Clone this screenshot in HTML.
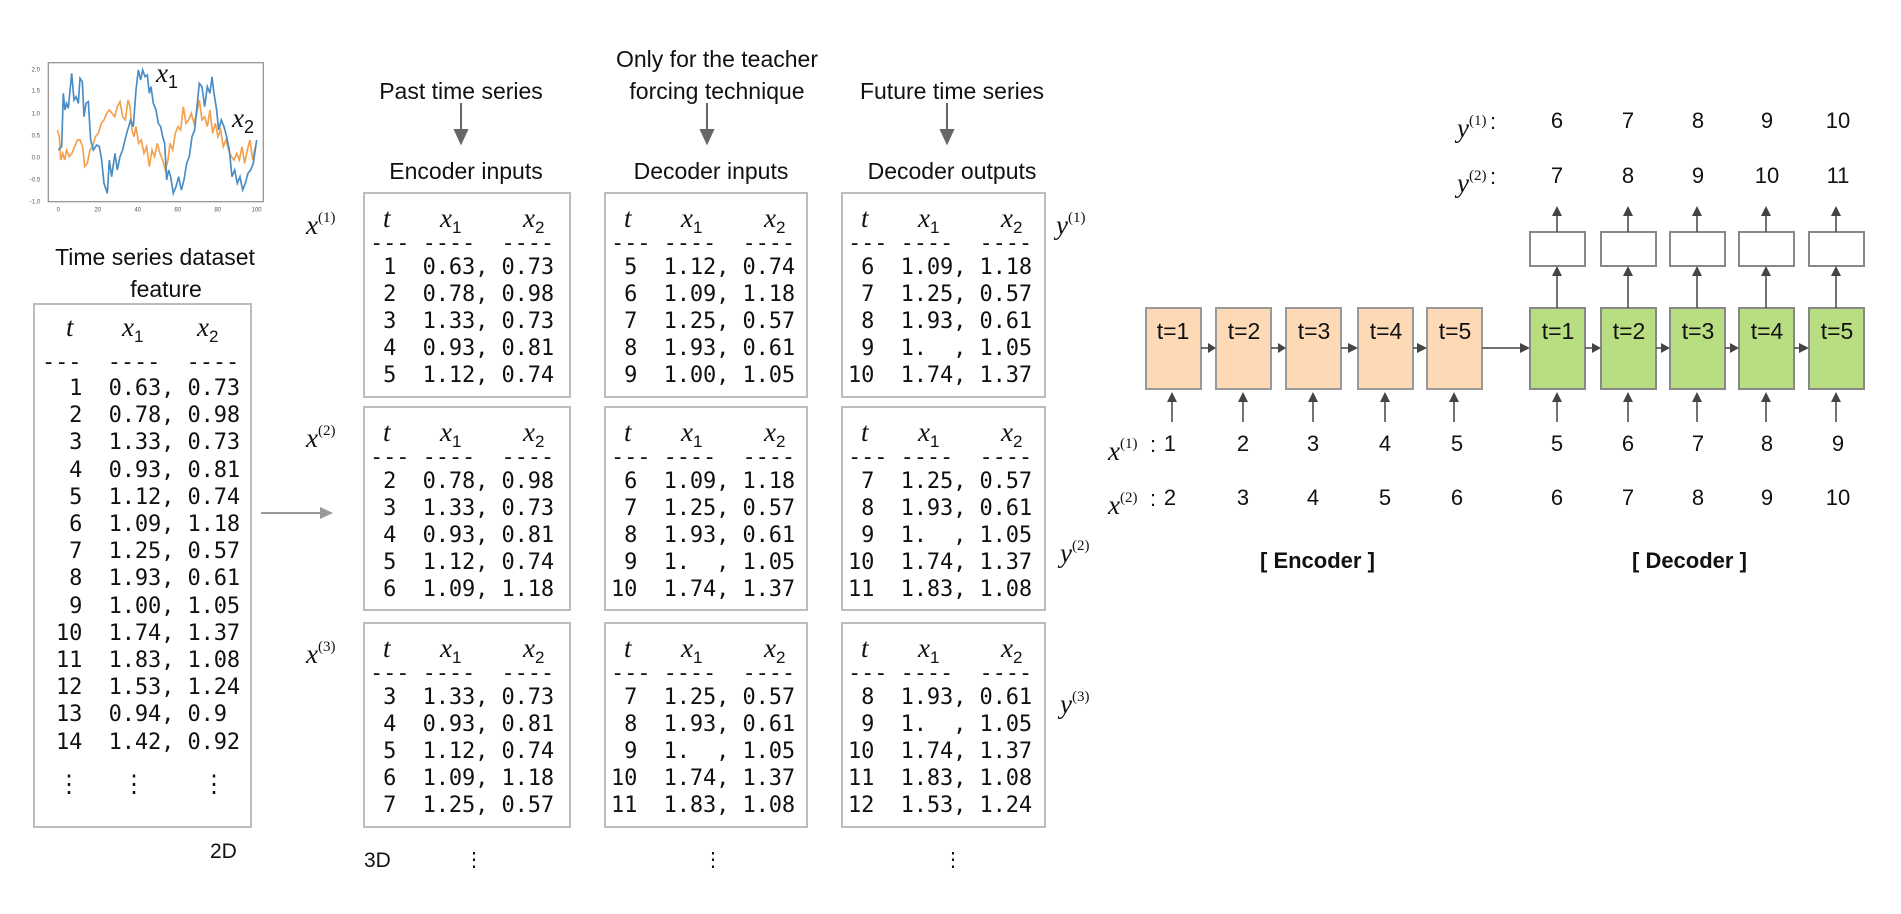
<!DOCTYPE html>
<html><head><meta charset="utf-8"><style>
html,body{margin:0;padding:0;background:#fff;}
body{width:1901px;height:914px;position:relative;overflow:hidden;font-family:"Liberation Sans",sans-serif;color:#111;}
.a{position:absolute;white-space:pre;}
.box{position:absolute;border:2px solid #bdbdbd;box-sizing:border-box;}
.mono{font-family:"DejaVu Sans Mono","Liberation Mono",monospace;font-size:22px;line-height:27px;position:absolute;white-space:pre;color:#111;letter-spacing:-0.1px;}
.hd{font-family:"Liberation Serif",serif;font-style:italic;font-size:27px;position:absolute;line-height:30px;}
.hd sub{font-style:normal;font-size:17px;vertical-align:-6px;font-family:"Liberation Sans",sans-serif;}
.lab{font-family:"Liberation Serif",serif;font-style:italic;font-size:27px;position:absolute;line-height:30px;}
.lab sup{font-style:normal;font-size:15px;vertical-align:12px;}
.h{position:absolute;font-size:23px;line-height:26px;text-align:center;width:300px;white-space:nowrap;}
.n{position:absolute;font-size:22px;line-height:24px;width:40px;text-align:center;}
</style></head><body>

<svg class="a" style="left:0;top:0" width="1901" height="914">
<g transform="translate(30,50) scale(0.3333)">
<rect x="55" y="38" width="645" height="417" fill="none" stroke="#999" stroke-width="4"/>
<g font-size="18" fill="#555" font-family="Liberation Sans">
<text x="5" y="64">2.0</text><text x="5" y="128">1.5</text><text x="5" y="196">1.0</text><text x="5" y="262">0.5</text><text x="5" y="328">0.0</text><text x="0" y="394">-0.5</text><text x="0" y="460">-1.0</text>
<text x="80" y="485">0</text><text x="193" y="485">20</text><text x="313" y="485">40</text><text x="433" y="485">60</text><text x="553" y="485">80</text><text x="665" y="485">100</text>
</g>
<polyline fill="none" stroke="#f4a04c" stroke-width="5" points="82,240 88,260 92,330 98,310 104,330 110,300 118,320 126,310 134,290 142,270 150,270 158,290 164,350 172,340 180,300 188,290 196,260 205,250 214,220 222,210 230,190 238,180 246,190 254,200 262,170 270,155 278,200 286,210 294,150 300,170 306,240 312,260 318,230 326,280 334,270 342,310 350,290 358,350 366,300 374,320 382,280 390,310 398,330 406,360 414,330 420,280 428,300 436,250 444,230 452,240 460,170 468,220 476,210 484,190 492,220 500,190 508,150 516,210 524,200 532,230 540,180 548,250 556,220 564,260 572,240 580,290 588,270 596,300 604,320 612,330 620,310 628,330 636,290 644,340 652,300 660,270 668,330 676,290"/>
<polyline fill="none" stroke="#4a8cc4" stroke-width="5" points="85,300 95,290 100,130 105,180 110,160 115,175 125,70 132,150 138,140 145,160 150,85 157,95 162,200 168,160 175,155 182,270 190,300 200,285 208,290 215,330 222,400 232,430 238,330 245,380 255,310 262,360 270,320 278,300 285,270 290,250 296,230 302,210 310,230 318,120 325,60 332,90 338,60 345,80 352,75 358,130 363,110 370,160 378,180 385,220 392,230 398,260 404,280 410,390 416,360 422,380 430,430 438,410 446,380 454,420 462,390 470,340 478,320 486,260 494,240 500,180 508,100 516,110 524,170 532,110 540,130 546,80 552,130 560,180 566,240 574,210 582,230 590,260 598,300 606,380 614,360 622,400 630,380 638,420 646,400 654,370 662,360 670,340 680,270"/>
</g>
<g stroke="#666" stroke-width="2" fill="#666">
<line x1="461" y1="103" x2="461" y2="132"/><polygon points="455,130 467,130 461,143"/>
<line x1="707" y1="103" x2="707" y2="132"/><polygon points="701,130 713,130 707,143"/>
<line x1="947" y1="103" x2="947" y2="132"/><polygon points="941,130 953,130 947,143"/>
<line x1="261" y1="513" x2="322" y2="513" stroke="#999"/><polygon points="320,507 320,519 333,513" fill="#999" stroke="none"/>
</g>
<g stroke="#444" stroke-width="1.5" fill="#444">
<g fill="#fdd9b5" stroke="#999" stroke-width="2">
<rect x="1146" y="308" width="55" height="81"/><rect x="1216" y="308" width="55" height="81"/><rect x="1286" y="308" width="55" height="81"/><rect x="1358" y="308" width="55" height="81"/><rect x="1427" y="308" width="55" height="81"/>
</g>
<g fill="#b9de81" stroke="#888" stroke-width="2">
<rect x="1530" y="308" width="55" height="81"/><rect x="1601" y="308" width="55" height="81"/><rect x="1670" y="308" width="55" height="81"/><rect x="1739" y="308" width="55" height="81"/><rect x="1809" y="308" width="55" height="81"/>
</g>
<g fill="#fff" stroke="#888" stroke-width="2">
<rect x="1530" y="232" width="55" height="34"/><rect x="1601" y="232" width="55" height="34"/><rect x="1670" y="232" width="55" height="34"/><rect x="1739" y="232" width="55" height="34"/><rect x="1809" y="232" width="55" height="34"/>
</g>
<line x1="1201" y1="348" x2="1210" y2="348"/><polygon points="1208,343 1208,353 1216,348" stroke="none"/>
<line x1="1271" y1="348" x2="1280" y2="348"/><polygon points="1278,343 1278,353 1286,348" stroke="none"/>
<line x1="1341" y1="348" x2="1350" y2="348"/><polygon points="1348,343 1348,353 1358,348" stroke="none"/>
<line x1="1413" y1="348" x2="1419" y2="348"/><polygon points="1417,343 1417,353 1427,348" stroke="none"/>
<line x1="1482" y1="348" x2="1520" y2="348"/><polygon points="1520,343 1520,353 1530,348" stroke="none"/>
<line x1="1585" y1="348" x2="1593" y2="348"/><polygon points="1592,343 1592,353 1601,348" stroke="none"/>
<line x1="1656" y1="348" x2="1662" y2="348"/><polygon points="1661,343 1661,353 1670,348" stroke="none"/>
<line x1="1725" y1="348" x2="1731" y2="348"/><polygon points="1730,343 1730,353 1739,348" stroke="none"/>
<line x1="1794" y1="348" x2="1800" y2="348"/><polygon points="1799,343 1799,353 1809,348" stroke="none"/>
<g>
<line x1="1172" y1="422" x2="1172" y2="400"/><polygon points="1167,402 1177,402 1172,392" stroke="none"/>
<line x1="1243" y1="422" x2="1243" y2="400"/><polygon points="1238,402 1248,402 1243,392" stroke="none"/>
<line x1="1313" y1="422" x2="1313" y2="400"/><polygon points="1308,402 1318,402 1313,392" stroke="none"/>
<line x1="1385" y1="422" x2="1385" y2="400"/><polygon points="1380,402 1390,402 1385,392" stroke="none"/>
<line x1="1454" y1="422" x2="1454" y2="400"/><polygon points="1449,402 1459,402 1454,392" stroke="none"/>
<line x1="1557" y1="422" x2="1557" y2="400"/><polygon points="1552,402 1562,402 1557,392" stroke="none"/>
<line x1="1628" y1="422" x2="1628" y2="400"/><polygon points="1623,402 1633,402 1628,392" stroke="none"/>
<line x1="1697" y1="422" x2="1697" y2="400"/><polygon points="1692,402 1702,402 1697,392" stroke="none"/>
<line x1="1766" y1="422" x2="1766" y2="400"/><polygon points="1761,402 1771,402 1766,392" stroke="none"/>
<line x1="1836" y1="422" x2="1836" y2="400"/><polygon points="1831,402 1841,402 1836,392" stroke="none"/>
</g>
<g>
<line x1="1557" y1="308" x2="1557" y2="274"/><polygon points="1552,276 1562,276 1557,266" stroke="none"/>
<line x1="1628" y1="308" x2="1628" y2="274"/><polygon points="1623,276 1633,276 1628,266" stroke="none"/>
<line x1="1697" y1="308" x2="1697" y2="274"/><polygon points="1692,276 1702,276 1697,266" stroke="none"/>
<line x1="1766" y1="308" x2="1766" y2="274"/><polygon points="1761,276 1771,276 1766,266" stroke="none"/>
<line x1="1836" y1="308" x2="1836" y2="274"/><polygon points="1831,276 1841,276 1836,266" stroke="none"/>
<line x1="1557" y1="232" x2="1557" y2="214"/><polygon points="1552,216 1562,216 1557,206" stroke="none"/>
<line x1="1628" y1="232" x2="1628" y2="214"/><polygon points="1623,216 1633,216 1628,206" stroke="none"/>
<line x1="1697" y1="232" x2="1697" y2="214"/><polygon points="1692,216 1702,216 1697,206" stroke="none"/>
<line x1="1766" y1="232" x2="1766" y2="214"/><polygon points="1761,216 1771,216 1766,206" stroke="none"/>
<line x1="1836" y1="232" x2="1836" y2="214"/><polygon points="1831,216 1841,216 1836,206" stroke="none"/>
</g>
</g>
<g font-family="Liberation Sans" font-size="23" fill="#111" text-anchor="middle">
<text x="1173" y="339">t=1</text><text x="1244" y="339">t=2</text><text x="1314" y="339">t=3</text><text x="1386" y="339">t=4</text><text x="1455" y="339">t=5</text>
<text x="1558" y="339">t=1</text><text x="1629" y="339">t=2</text><text x="1698" y="339">t=3</text><text x="1767" y="339">t=4</text><text x="1837" y="339">t=5</text>
</g>
</svg>

<div class="lab" style="left:156px;top:58px">x<sub style="font-style:normal;font-size:18px;vertical-align:-6px;font-family:'Liberation Sans'">1</sub></div>
<div class="lab" style="left:232px;top:103px">x<sub style="font-style:normal;font-size:18px;vertical-align:-6px;font-family:'Liberation Sans'">2</sub></div>

<div class="h" style="left:5px;top:244px">Time series dataset</div>
<div class="h" style="left:16px;top:276px">feature</div>
<div class="h" style="left:311px;top:78px">Past time series</div>
<div class="h" style="left:316px;top:158px">Encoder inputs</div>
<div class="h" style="left:567px;top:46px">Only for the teacher</div>
<div class="h" style="left:567px;top:78px">forcing technique</div>
<div class="h" style="left:561px;top:158px">Decoder inputs</div>
<div class="h" style="left:802px;top:78px">Future time series</div>
<div class="h" style="left:802px;top:158px">Decoder outputs</div>
<div class="a" style="left:210px;top:840px;font-size:21px">2D</div>
<div class="a" style="left:364px;top:849px;font-size:21px">3D</div>
<div class="a" style="left:464px;top:847px;font-size:20px">⋮</div>
<div class="a" style="left:703px;top:847px;font-size:20px">⋮</div>
<div class="a" style="left:943px;top:847px;font-size:20px">⋮</div>

<div class="box" style="left:33px;top:303px;width:219px;height:525px"></div>
<div class="hd" style="left:66px;top:312px">t</div>
<div class="hd" style="left:122px;top:312px">x<sub>1</sub></div>
<div class="hd" style="left:197px;top:312px">x<sub>2</sub></div>
<div class="mono" style="left:42px;top:349px">---  ----  ----</div>
<div class="mono" style="left:56px;top:375px;line-height:27.2px"> 1  0.63, 0.73
 2  0.78, 0.98
 3  1.33, 0.73
 4  0.93, 0.81
 5  1.12, 0.74
 6  1.09, 1.18
 7  1.25, 0.57
 8  1.93, 0.61
 9  1.00, 1.05
10  1.74, 1.37
11  1.83, 1.08
12  1.53, 1.24
13  0.94, 0.9
14  1.42, 0.92</div>
<div class="a" style="left:57px;top:770px;font-size:24px">⋮</div>
<div class="a" style="left:122px;top:770px;font-size:24px">⋮</div>
<div class="a" style="left:202px;top:770px;font-size:24px">⋮</div>

<div id="grid"></div>
<script>
(function(){
var cols=[{x:363,w:208},{x:604,w:204},{x:841,w:205}];
var rows=[{y:192,h:206},{y:406,h:205},{y:622,h:206}];
var data=[
[[" 1  0.63, 0.73"," 2  0.78, 0.98"," 3  1.33, 0.73"," 4  0.93, 0.81"," 5  1.12, 0.74"],
 [" 2  0.78, 0.98"," 3  1.33, 0.73"," 4  0.93, 0.81"," 5  1.12, 0.74"," 6  1.09, 1.18"],
 [" 3  1.33, 0.73"," 4  0.93, 0.81"," 5  1.12, 0.74"," 6  1.09, 1.18"," 7  1.25, 0.57"]],
[[" 5  1.12, 0.74"," 6  1.09, 1.18"," 7  1.25, 0.57"," 8  1.93, 0.61"," 9  1.00, 1.05"],
 [" 6  1.09, 1.18"," 7  1.25, 0.57"," 8  1.93, 0.61"," 9  1.  , 1.05","10  1.74, 1.37"],
 [" 7  1.25, 0.57"," 8  1.93, 0.61"," 9  1.  , 1.05","10  1.74, 1.37","11  1.83, 1.08"]],
[[" 6  1.09, 1.18"," 7  1.25, 0.57"," 8  1.93, 0.61"," 9  1.  , 1.05","10  1.74, 1.37"],
 [" 7  1.25, 0.57"," 8  1.93, 0.61"," 9  1.  , 1.05","10  1.74, 1.37","11  1.83, 1.08"],
 [" 8  1.93, 0.61"," 9  1.  , 1.05","10  1.74, 1.37","11  1.83, 1.08","12  1.53, 1.24"]]];
var h="";
for(var c=0;c<3;c++)for(var r=0;r<3;r++){
 var X=cols[c].x,Y=rows[r].y;
 h+='<div class="box" style="left:'+X+'px;top:'+Y+'px;width:'+cols[c].w+'px;height:'+rows[r].h+'px"></div>';
 h+='<div class="hd" style="left:'+(X+20)+'px;top:'+(Y+11)+'px">t</div>';
 h+='<div class="hd" style="left:'+(X+77)+'px;top:'+(Y+11)+'px">x<sub>1</sub></div>';
 h+='<div class="hd" style="left:'+(X+160)+'px;top:'+(Y+11)+'px">x<sub>2</sub></div>';
 h+='<div class="mono" style="left:'+(X+7)+'px;top:'+(Y+38)+'px">--- ----  ----</div>';
 h+='<div class="mono" style="left:'+(X+7)+'px;top:'+(Y+62)+'px">'+data[c][r].join("\n")+'</div>';
}
document.getElementById("grid").innerHTML=h;
})();
</script>

<div class="lab" style="left:306px;top:203px">x<sup>(1)</sup></div>
<div class="lab" style="left:306px;top:416px">x<sup>(2)</sup></div>
<div class="lab" style="left:306px;top:632px">x<sup>(3)</sup></div>
<div class="lab" style="left:1056px;top:203px">y<sup>(1)</sup></div>
<div class="lab" style="left:1060px;top:531px">y<sup>(2)</sup></div>
<div class="lab" style="left:1060px;top:682px">y<sup>(3)</sup></div>

<div class="lab" style="left:1457px;top:106px">y<sup>(1)</sup></div><div class="a" style="left:1490px;top:109px;font-size:22px">:</div>
<div class="lab" style="left:1457px;top:161px">y<sup>(2)</sup></div><div class="a" style="left:1490px;top:164px;font-size:22px">:</div>
<div class="lab" style="left:1108px;top:429px">x<sup>(1)</sup></div><div class="a" style="left:1150px;top:432px;font-size:22px">:</div>
<div class="lab" style="left:1108px;top:483px">x<sup>(2)</sup></div><div class="a" style="left:1150px;top:486px;font-size:22px">:</div>
<div id="nums"></div>
<script>
(function(){
var h="";
function row(xs,vals,y){for(var i=0;i<xs.length;i++)h+='<div class="n" style="left:'+(xs[i]-20)+'px;top:'+y+'px">'+vals[i]+'</div>';}
var dx=[1557,1628,1698,1767,1838],ex=[1170,1243,1313,1385,1457];
row(dx,[6,7,8,9,10],109);row(dx,[7,8,9,10,11],164);
row(ex.concat(dx),[1,2,3,4,5,5,6,7,8,9],432);
row(ex.concat(dx),[2,3,4,5,6,6,7,8,9,10],486);
document.getElementById("nums").innerHTML=h;
})();
</script>
<div class="a" style="left:1260px;top:548px;font-size:22px;font-weight:bold">[ Encoder ]</div>
<div class="a" style="left:1632px;top:548px;font-size:22px;font-weight:bold">[ Decoder ]</div>
</body></html>
